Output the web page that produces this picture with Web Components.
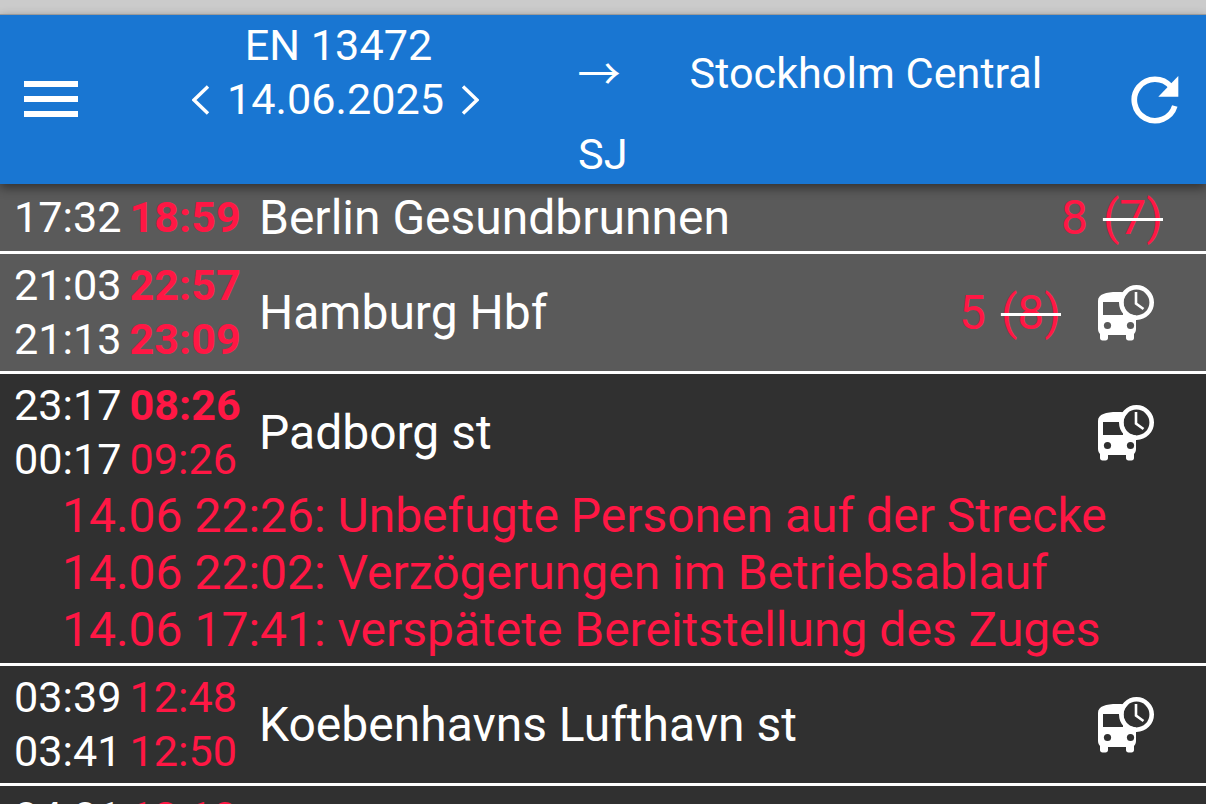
<!DOCTYPE html>
<html><head><meta charset="utf-8">
<style>
html,body{margin:0;padding:0;height:100%;overflow:hidden;background:#303030;font-family:Roboto,"Liberation Sans",sans-serif;}
</style></head><body>
<train-app></train-app>
<script>
function def(name, css, html){
  customElements.define(name, class extends HTMLElement{
    constructor(){super();const r=this.attachShadow({mode:'open'});r.innerHTML='<style>'+css+'</style>'+(typeof html==='function'?html(this):html);}
  });
}
def('menu-icon',':host{display:block;width:54px;height:36px}svg{display:block}',
 '<svg width="54" height="36" viewBox="0 0 54 36" fill="#fff"><rect width="54" height="6"/><rect y="15" width="54" height="6"/><rect y="30" width="54" height="6"/></svg>');
def('chev-icon',':host{display:block;width:18px;height:30px}svg{display:block}',
 el=>'<svg width="18" height="30" viewBox="0 0 18 30" fill="none" stroke="#fff" stroke-width="3.4"><path d="'+(el.getAttribute('dir')==='r'?'M2 1.5 16 15 2 28.5':'M16 1.5 2 15 16 28.5')+'"/></svg>');
def('refresh-icon',':host{display:block;width:48px;height:48px}svg{display:block}',
 '<svg width="48" height="48" viewBox="0 0 48 48"><path d="M43.8 30A20.7 20.7 0 1 1 39.9 10.7" fill="none" stroke="#fff" stroke-width="5.7"/><path d="M47.3 0V20.7H27.3Z" fill="#fff"/></svg>');
def('bus-clock-icon',':host{display:block;width:57px;height:56px}svg{display:block}',
 '<svg width="57" height="56" viewBox="0 0 57 56"><mask id="m"><rect width="57" height="56" fill="#fff"/><circle cx="38.5" cy="17.5" r="13" fill="#000"/><rect x="5" y="17" width="20" height="13" fill="#000"/><circle cx="9.5" cy="40.5" r="3.6" fill="#000"/><circle cx="32.5" cy="40.5" r="3.6" fill="#000"/></mask>'
 +'<path mask="url(#m)" fill="#fff" d="M0 16C0 9 8 7 19 7S38 9 38 16V44C38 46 37 48 36 49V53C36 54.5 35 55.5 33.5 55.5H30.5C29 55.5 28 54.5 28 53V50H10V53C10 54.5 9 55.5 7.5 55.5H4.5C3 55.5 2 54.5 2 53V49C1 48 0 46 0 44Z"/>'
 +'<circle cx="38.5" cy="17.5" r="15.2" fill="none" stroke="#fff" stroke-width="4.6"/><path d="M38 7V18.5L45.5 24" fill="none" stroke="#fff" stroke-width="2.6"/></svg>');
def('train-header',`
 :host{display:flex;position:relative;z-index:2;height:170px;background:#1976d2;color:#fff;border-top:1px solid #9a9a9a;box-sizing:border-box;box-shadow:0 4px 10px rgba(0,0,0,.45);font-size:43.2px;line-height:54px}
 .menu{width:130px;flex:none;display:flex;align-items:center;padding:0 0 0 24px;box-sizing:border-box;margin-top:-1px}
 .train{width:414px;flex:none;text-align:center;padding-top:4px;box-sizing:border-box;}
 .en{padding-left:3px}
 .date{display:flex;justify-content:center;align-items:center;gap:17px;margin-right:3px}
 .carrier{width:102px;flex:none;box-sizing:border-box;padding:0 0 0 34px;display:flex;flex-direction:column;justify-content:space-between}
 .arrow{font-family:"Noto Sans CJK JP","Noto Sans",sans-serif;height:54px;margin-top:29px;margin-left:-0.5px}
 .sj{padding-bottom:2px}
 .dest{flex:1;padding:32px 2px 0 0;text-align:center}
 .ref{width:118px;flex:none;display:flex;align-items:center;justify-content:center;padding-left:16px;box-sizing:border-box}
`,`<div class="menu"><menu-icon></menu-icon></div>
 <div class="train"><div class="en">EN 13472</div><div class="date"><chev-icon></chev-icon><span>14.06.2025</span><chev-icon dir="r"></chev-icon></div></div>
 <div class="carrier"><div class="arrow">→</div><div class="sj">SJ</div></div>
 <div class="dest">Stockholm Central</div>
 <div class="ref"><refresh-icon></refresh-icon></div>`);
def('time-line',`
 :host{display:block;font-size:43.2px;line-height:54px;color:#fff;white-space:nowrap}
 .a{color:#ff1744;margin-left:8px}
 :host([bold]) .a{font-weight:700}
`,el=>'<span>'+el.getAttribute('plan')+'</span><span class="a">'+el.getAttribute('act')+'</span>');
def('stop-row',`
 :host{display:block;color:#fff;border-bottom:3px solid #fff;background:#303030}
 :host([past]){background:#5a5a5a}
 .main{display:flex;align-items:center;padding:var(--pad,5px) 0 var(--pad,4px) 14px}
 .times{width:245px;flex:none}
 .name{flex:1;font-size:48px;line-height:54px;white-space:nowrap}
 .track{font-size:48px;line-height:54px;color:#ff1744;white-space:nowrap}
 .track s{text-decoration:line-through;text-decoration-color:#fff;text-decoration-thickness:3px;margin-left:3px}
 .ic{flex:none;width:145px;display:flex;justify-content:flex-start;padding-left:37px;box-sizing:border-box}
 :host([notes]) .notes{margin-top:-4px;padding-bottom:5px}
`,el=>{
 const tr=el.getAttribute('track'),old=el.getAttribute('was');
 return '<div class="main"><div class="times"><slot name="times"></slot></div><div class="name">'+el.getAttribute('name')+'</div>'
 +(tr?'<div class="track">'+tr+' <s>('+old+')</s></div>':'')
 +(el.hasAttribute('bus')?'<div class="ic"><bus-clock-icon></bus-clock-icon></div>':'<div style="width:43px;flex:none"></div>')
 +'</div><div class="notes"><slot></slot></div>';
});
def('stop-note',':host{display:block;font-size:48px;line-height:57px;color:#ff1744;padding-left:62px;white-space:nowrap}','<slot></slot>');
def('train-app',`
 :host{display:block;height:804px;overflow:hidden;background:#303030}
 .top{height:14px;background:#cbcbcb}
 .list{position:relative;z-index:1}
`,`<div class="top"></div><train-header></train-header>
 <div class="list">
 <stop-row past name="Berlin Gesundbrunnen" track="8" was="7" style="--pad:6.5px"><time-line slot="times" bold plan="17:32" act="18:59"></time-line></stop-row>
 <stop-row past bus name="Hamburg Hbf" track="5" was="8"><time-line slot="times" bold plan="21:03" act="22:57"></time-line><time-line slot="times" bold plan="21:13" act="23:09"></time-line></stop-row>
 <stop-row notes bus name="Padborg st"><time-line slot="times" bold plan="23:17" act="08:26"></time-line><time-line slot="times" plan="00:17" act="09:26"></time-line>
 <stop-note>14.06 22:26: Unbefugte Personen auf der Strecke</stop-note>
 <stop-note>14.06 22:02: Verzögerungen im Betriebsablauf</stop-note>
 <stop-note>14.06 17:41: verspätete Bereitstellung des Zuges</stop-note></stop-row>
 <stop-row bus name="Koebenhavns Lufthavn st"><time-line slot="times" plan="03:39" act="12:48"></time-line><time-line slot="times" plan="03:41" act="12:50"></time-line></stop-row>
 <stop-row name=""><time-line slot="times" plan="04:01" act="13:10"></time-line></stop-row>
 </div>`);
</script>
</body></html>
